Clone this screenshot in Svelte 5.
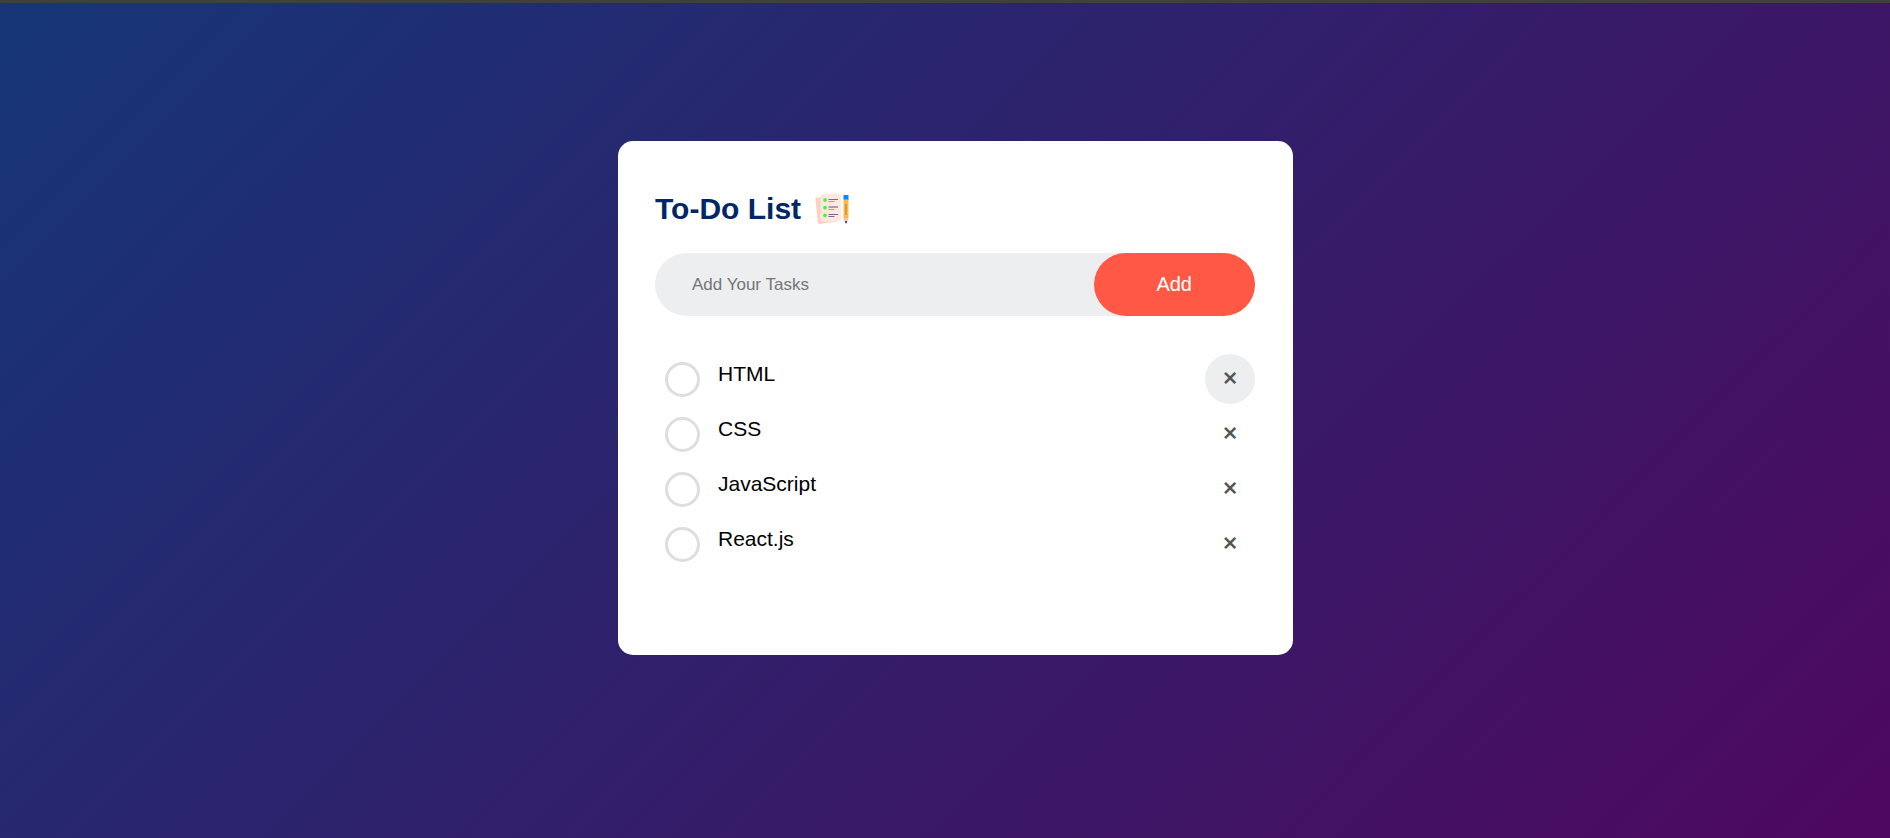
<script>
  let tasks = $state([
    { id: 1, name: 'HTML', done: false },
    { id: 2, name: 'CSS', done: false },
    { id: 3, name: 'JavaScript', done: false },
    { id: 4, name: 'React.js', done: false }
  ]);
  let draft = $state('');
  let active = $state(1);
  let nextId = 5;

  function addTask(event) {
    event.preventDefault();
    const name = draft.trim();
    if (!name) return;
    tasks.push({ id: nextId++, name, done: false });
    draft = '';
  }

  function removeTask(id) {
    tasks = tasks.filter((task) => task.id !== id);
  }
</script>

<main class="page">
  <section class="card">
    <h1>
      To-Do List
      <svg class="logo" viewBox="0 0 36 36" aria-hidden="true">
        <path d="M1 6.500 20 5.500 22.500 30.500 4.500 33Q3 33 2.800 31.500L0.500 8Q.5 6.600 1.500 6.500Z" fill="#ffd0c2" />
        <rect x="5.500" y="3" width="20.500" height="27.500" rx="1.500" fill="#ffe9df" />
        <g fill="#3dfa3d">
          <circle cx="10" cy="9" r="1.900" />
          <circle cx="10" cy="16.700" r="1.900" />
          <circle cx="10" cy="24.300" r="1.900" />
        </g>
        <g stroke="#7a6594" stroke-width="1" fill="none">
          <path d="M13.500 8.500h9.500M13.500 23.500h9.500M13.500 25.500h6" />
          <path d="M13.500 10.500h6M13.500 15.500h9.500M13.500 16.500h9.500M13.500 18.500h6" opacity=".6" />
        </g>
        <path d="M28.500 7.500h5v19.500l-1.700 4.500h-1.600l-1.700-4.500Z" fill="#ffb74f" />
        <path d="M28.500 27.500h5l-1.500 3.500h-2Z" fill="#f9c4cb" />
        <path d="M29.800 30.200h2.400L31 33Z" fill="#26222e" />
        <rect x="28.500" y="4" width="5" height="4.500" rx=".5" fill="#0a84ff" />
        <path d="M31 13v11" stroke="#b37a3c" stroke-width="1" />
      </svg>
    </h1>

    <form class="row" onsubmit={addTask}>
      <input type="text" placeholder="Add Your Tasks" aria-label="Add Your Tasks" bind:value={draft} />
      <button type="submit">Add</button>
    </form>

    <ul>
      {#each tasks as task (task.id)}
        <li>
          <label class:done={task.done}>
            <input type="checkbox" bind:checked={task.done} />
            <span>{task.name}</span>
          </label>
          <button
            type="button"
            class:active={active === task.id}
            aria-label="Remove {task.name}"
            onmouseenter={() => (active = task.id)}
            onclick={() => removeTask(task.id)}>×</button>
        </li>
      {/each}
    </ul>
  </section>
</main>

<style>
  :global(body) {
    font-family: "Liberation Sans", Arial, sans-serif;
  }

  .page {
    box-sizing: border-box;
    min-height: 100vh;
    padding: 138px 12px 24px 33px;
    border-top: 3px solid #404040;
    background: linear-gradient(135deg, #153677, #4e085f) border-box;
  }

  .card {
    box-sizing: border-box;
    max-width: 675px;
    margin: 0 auto;
    padding: 49px 38px 86px 37px;
    border-radius: 15px;
    background: #fff;
  }

  h1 {
    display: flex;
    align-items: center;
    gap: 14px;
    margin: 0 0 26px;
    color: #002765;
    font-size: 30px;
    line-height: 37px;
  }

  .logo {
    width: 36px;
    height: 36px;
  }

  .row {
    display: flex;
    margin-bottom: 38px;
    border-radius: 32px;
    background: #edeef0;
  }

  .row input {
    flex: 1;
    min-width: 0;
    padding: 0 12px 0 37px;
    border: 0;
    outline: 0;
    background: transparent;
    color: #000;
    font: 17px "Liberation Sans", Arial, sans-serif;
  }

  .row input::placeholder {
    color: #757575;
  }

  .row button {
    padding: 20px 63px 20px 62px;
    border: 0;
    border-radius: 32px;
    background: #ff5945;
    color: #fff;
    font: 20px/23px "Liberation Sans", Arial, sans-serif;
    cursor: pointer;
  }

  ul {
    display: grid;
    gap: 5px;
    margin: 0;
    padding: 0;
    list-style: none;
  }

  li {
    display: flex;
    justify-content: space-between;
  }

  label {
    display: flex;
    flex: 1;
    align-items: flex-start;
    gap: 18px;
    padding: 8px 0 7px 10px;
    color: #000;
    font-size: 21px;
    line-height: 24px;
    cursor: pointer;
  }

  label input {
    appearance: none;
    box-sizing: border-box;
    width: 35px;
    height: 35px;
    margin: 0;
    border: 3px solid #dedede;
    border-radius: 50%;
    cursor: pointer;
  }

  label input:checked {
    border-color: #ff5945;
    background: #ff5945;
  }

  .done span {
    color: #555;
    text-decoration: line-through;
  }

  li button {
    width: 50px;
    height: 50px;
    padding: 0 0 5px;
    border: 0;
    border-radius: 50%;
    background: transparent;
    color: #555;
    font: 500 25px/45px Inter, Arial, sans-serif;
    cursor: pointer;
  }

  li button.active {
    background: #edeef0;
  }
</style>
